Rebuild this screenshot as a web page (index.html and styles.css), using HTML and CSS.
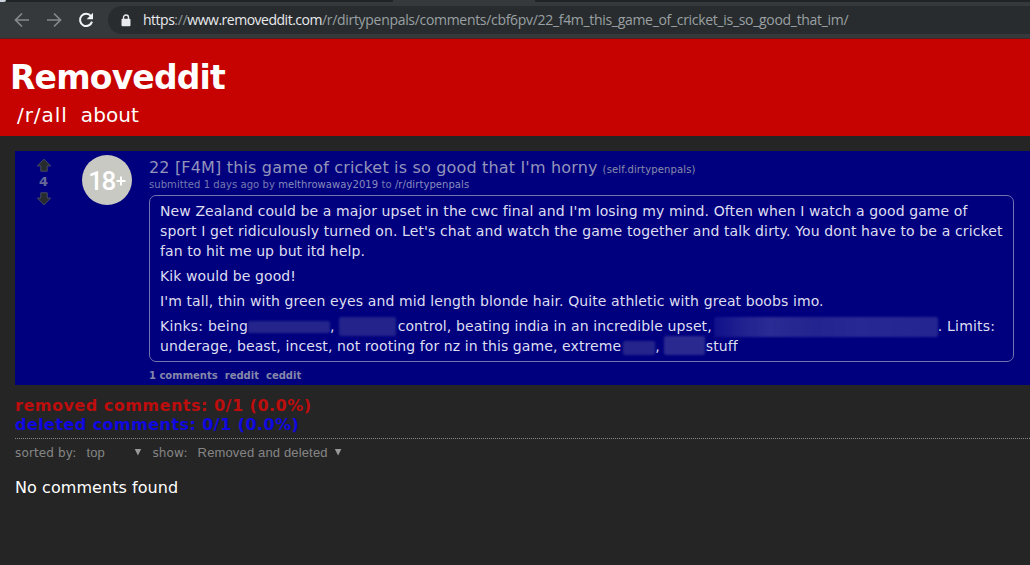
FILE: index.html
```html
<!DOCTYPE html>
<html lang="en">
<head>
<meta charset="utf-8">
<title>Removeddit</title>
<link rel="stylesheet" href="styles.css">
</head>
<body>
<div class="browser">
  <div class="tabstrip"><i class="tab-corner"></i><i class="active-tab"></i></div>
  <div class="toolbar">
    <svg class="nav-icon" width="16" height="16" viewBox="0 0 16 16"><path d="M15 8H2M8 1.5L1.5 8L8 14.5"/></svg>
    <svg class="nav-icon" width="16" height="16" viewBox="0 0 16 16"><path d="M1 8H14M8 1.5L14.5 8L8 14.5"/></svg>
    <svg class="nav-icon reload" width="16" height="16" viewBox="0 0 16 16"><path d="M13 4.2A6.1 6.1 0 1 0 14 9.6"/><path class="solid" d="M15 .8V7.2H8.6Z"/></svg>
    <div class="address">
      <svg class="lock" width="10" height="13" viewBox="0 0 10 13"><path d="M2.5 6V3.5a2.5 2.5 0 0 1 5 0V6" fill="none" stroke="#e8eaed" stroke-width="1.4"/><rect x=".5" y="4.8" width="9" height="7.4" rx="1" fill="#e8eaed"/></svg>
      <span class="url"><span class="bright">https</span>://<span class="bright">www.removeddit.com</span><span class="path">/r/dirtypenpals/comments/cbf6pv/22_f4m_this_game_of_cricket_is_so_good_that_im/</span></span>
    </div>
  </div>
</div>
<header class="site-header">
  <h1 class="brand">Removeddit</h1>
  <nav class="site-nav"><a class="nav-all">/r/all</a><a>about</a></nav>
</header>
<main class="page">
  <article class="post">
    <div class="votes">
      <svg class="arrow" width="16" height="15" viewBox="0 0 16 15"><path d="M8 1.2L14.6 7.9H11.2V13.2H4.8V7.9H1.4Z"/></svg>
      <span class="score">4</span>
      <svg class="arrow" width="16" height="15" viewBox="0 0 16 15"><path d="M8 13.8L14.6 7.1H11.2V1.8H4.8V7.1H1.4Z"/></svg>
    </div>
    <div class="nsfw"><span>18</span><svg width="10" height="10" viewBox="0 0 10 10"><path d="M5 .5V9.5M.5 5H9.5" stroke="#fff" stroke-width="2"/></svg></div>
    <div class="post-main">
      <div class="title"><span class="title-text">22 [F4M] this game of cricket is so good that I'm horny</span><span class="domain">(self.dirtypenpals)</span></div>
      <div class="byline">submitted 1 days ago by <b>melthrowaway2019</b> to <b>/r/dirtypenpals</b></div>
      <div class="selftext">
        <p>New Zealand could be a major upset in the cwc final and I'm losing my mind. Often when I watch a good game of<br><span class="wide">sport I get ridiculously turned on. Let's chat and watch the game together and talk dirty. You dont have to be a cricket</span><br>fan to hit me up but itd help.</p>
        <p>Kik would be good!</p>
        <p>I'm tall, thin with green eyes and mid length blonde hair. Quite athletic with great boobs imo.</p>
        <div class="row"><span class="wider">Kinks: being</span><i class="blot b1"></i><span>,</span><i class="blot b2"></i><span>control, beating india in an incredible upset,</span><i class="blot b3"></i><span class="wider">. Limits:</span></div>
        <div class="row"><span>underage, beast, incest, not rooting for nz in this game, extreme</span><i class="blot b4"></i><span>,</span><i class="blot b5"></i><span>stuff</span></div>
      </div>
      <div class="links"><a>1 comments</a><a>reddit</a><a>ceddit</a></div>
    </div>
  </article>
  <section class="stats">
    <div class="removed">removed comments: 0/1 (0.0%)</div>
    <div class="deleted">deleted comments: 0/1 (0.0%)</div>
  </section>
  <div class="filters">
    <span class="label">sorted by:</span><span class="select sort">top<i class="caret"></i></span>
    <span class="label">show:</span><span class="select show">Removed and deleted<i class="caret"></i></span>
  </div>
  <p class="empty">No comments found</p>
</main>
</body>
</html>
```
FILE: styles.css
```css
* { box-sizing: border-box; }
body { margin: 0; width: 1030px; height: 565px; overflow: hidden; background: #252525; font-family: Verdana, "DejaVu Sans", sans-serif; white-space: nowrap; }
i { font-style: normal; display: block; }
.browser { height: 39px; background: #35393b; border-bottom: 1px solid #4a2424; }
.tabstrip { height: 2px; background: #202426; display: flex; }
.tab-corner { width: 6px; height: 2px; background: #cbd3dc; border-bottom-right-radius: 6px; }
.active-tab { margin-left: 387px; width: 142px; background: #35393b; }
.toolbar { display: flex; align-items: center; height: 36px; padding-left: 14px; }
.nav-icon { fill: none; stroke: #85898b; stroke-width: 1.7; margin-right: 16px; flex: none; }
.reload { stroke: #f1f3f4; stroke-width: 2; margin-right: 14px; }
.solid { fill: #f1f3f4; stroke: none; }
.address { display: flex; align-items: center; flex: 1; height: 28px; padding-left: 13px; border-radius: 14px 0 0 14px; background: #282c2e; }
.lock { margin-right: 12px; flex: none; }
.url { font: 14px/20px "Open Sans", "Noto Sans", sans-serif; color: #8f9598; letter-spacing: -.33px; }
.bright { color: #e8eaed; letter-spacing: -.49px; }
.path { color: #9aa0a3; letter-spacing: -.31px; }
.site-header { height: 97px; background: #c60300; color: #fff; padding: 18px 10px 0; }
.brand { margin: 0; font-size: 33px; line-height: 41px; font-weight: bold; letter-spacing: -.8px; }
.site-nav { display: flex; gap: 13px; padding-left: 7px; font-size: 20px; line-height: 34px; letter-spacing: .1px; }
.nav-all { letter-spacing: .95px; }
.page { padding: 15px 0 0 15px; }
.post { height: 234px; background: #00007f; display: flex; align-items: flex-start; color: #888da8; }
.votes { width: 57px; padding-top: 7px; display: flex; flex-direction: column; align-items: center; }
.arrow { fill: #262b2d; stroke: #484b60; stroke-width: 1; }
.score { font-size: 13px; line-height: 18px; font-weight: bold; color: #666998; }
.nsfw { width: 50px; height: 50px; margin: 4px 17px 0 10px; border-radius: 50%; background: #c9c9c3; color: #fff; display: flex; align-items: center; justify-content: center; font: 26px/52px Roboto, sans-serif; }
.nsfw span { font-weight: 500; letter-spacing: -1.5px; padding: 2px 1px 0 0; }
.nsfw svg { margin-top: 1px; }
.post-main { width: 865px; }
.title { display: flex; align-items: baseline; gap: 5px; padding-top: 5px; height: 27px; line-height: 24px; }
.title-text { font-size: 16px; letter-spacing: .17px; color: #9394b9; }
.domain { font-size: 10px; letter-spacing: .14px; }
.byline { height: 17px; font-size: 10px; line-height: 14px; letter-spacing: .07px; color: #777bb0; }
.byline b { font-weight: normal; color: #898dbb; }
.selftext { height: 167px; border: 1px solid #7274ad; border-radius: 7px; padding: 5px 10px; font-size: 14px; line-height: 20px; letter-spacing: .1px; color: #dedef0; }
.selftext p { margin: 0 0 5px; }
.selftext .wide { letter-spacing: .12px; }
.selftext .wider { letter-spacing: .2px; }
.row { display: flex; height: 20px; }
.row span { flex: none; }
.blot { flex: none; background: #24248c; border-radius: 2px; filter: blur(1px); }
.b1 { width: 82px; height: 12px; margin-top: 5px; }
.b2 { width: 57px; height: 19px; margin: 1px 2px 0 4px; background: #23238b; }
.b3 { width: 224px; height: 20px; margin: 1px 0 0 2px; background: linear-gradient(90deg, #10108a 0, #202091 12%, #2b2b94 25%, #242490 45%, #282895 65%, #252591); }
.b4 { width: 32px; height: 14px; margin: 5px 0 0 2px; }
.b5 { width: 41px; height: 19px; margin: 0 1px 0 4px; background: #292990; }
.links { display: flex; gap: 7px; padding-top: 6px; font-size: 10px; line-height: 16px; font-weight: bold; color: #8588a8; }
.stats { height: 54px; padding-top: 11px; font-size: 16px; line-height: 19px; font-weight: bold; border-bottom: 1px dotted #888; }
.removed { color: #bd0d0d; letter-spacing: .5px; }
.deleted { color: #1008e0; letter-spacing: .44px; }
.filters { display: flex; height: 28px; line-height: 28px; font-size: 12px; letter-spacing: .15px; color: #858585; }
.select { display: flex; align-items: center; justify-content: space-between; font: 13px/28px "Liberation Sans", Arial, sans-serif; letter-spacing: .15px; }
.sort { width: 55px; margin: 0 11px 0 10px; }
.show { width: 144px; margin-left: 10px; }
.caret { width: 7px; height: 7px; margin-top: -2px; background: #999; clip-path: polygon(0 0, 100% 0, 50% 100%); }
.empty { margin: 11px 0 0; font-size: 16px; line-height: 20px; letter-spacing: .06px; color: #fff; }
```
